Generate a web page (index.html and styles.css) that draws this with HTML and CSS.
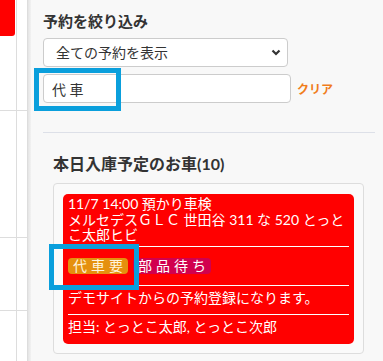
FILE: index.html
```html
<!DOCTYPE html>
<html lang="ja">
<head>
  <meta charset="UTF-8">
  <title>入庫予定</title>
  <meta name="viewport" content="width=device-width, initial-scale=1.0">
  <link rel="stylesheet" href="styles.css">
</head>
<body>

<div class="page">
  <div class="cal">
    <div class="cal-row r1">
      <div class="cal-cell"><div class="cal-ev"></div></div>
      <div class="cal-cell last"></div>
    </div>
    <div class="cal-row r2">
      <div class="cal-cell"></div>
      <div class="cal-cell last"></div>
    </div>
    <div class="cal-row r3">
      <div class="cal-cell"></div>
      <div class="cal-cell last"></div>
    </div>
    <div class="cal-row r4">
      <div class="cal-cell"></div>
      <div class="cal-cell last"></div>
    </div>
  </div>
  <div class="cal-shadow"></div>

  <div class="side">
    <h2 class="filter-title">予約を絞り込み</h2>

    <div class="select-wrap">
      <select class="filter-select">
        <option>全ての予約を表示</option>
      </select>
      <svg class="chevron" width="10" height="7" viewBox="0 0 10 7">
        <path d="M1.5 1.5 L5 5 L8.5 1.5" fill="none" stroke="#333" stroke-width="2.2"/>
      </svg>
    </div>

    <div class="search-row">
      <input class="search" type="text" value="代 車">
      <a class="clear" href="#">クリア</a>
    </div>

    <hr class="divider">

    <div class="today">
      <h3 class="today-title">本日入庫予定のお車(10)</h3>

      <div class="card">
        <div class="rsv">
          <div class="rsv-head">11/7 14:00 預かり車検<br>メルセデスＧＬＣ 世田谷 311 な 520 とっとこ太郎ヒビ</div>
          <hr class="rsv-line first">
          <div class="tags">
            <span class="tag car">代車要</span>
            <span class="tag parts">部品待ち</span>
          </div>
          <hr class="rsv-line">
          <div class="rsv-note">デモサイトからの予約登録になります。</div>
          <hr class="rsv-line">
          <div class="rsv-staff">担当: とっとこ太郎, とっとこ次郎</div>
        </div>
      </div>
    </div>
  </div>

  <div class="mark mark-search"></div>
  <div class="mark mark-tag"></div>
</div>

</body>
</html>
```

FILE: styles.css
```css
html, body {
  margin: 0;
  height: 100%;
  overflow: hidden;
}
body {
  font-family: 'Lato', 'Noto Sans CJK JP', sans-serif;
  color: #333;
  background: #f8f8f8;
}
.page {
  position: relative;
  display: flex;
  height: 100%;
}

/* left calendar strip */
.cal {
  width: 27px;
  border-right: 1px solid #ddd;
  background: #fff;
  display: flex;
  flex-direction: column;
}
.cal-row {
  display: flex;
  box-sizing: border-box;
  border-bottom: 1px solid #ddd;
}
.r1 { height: 111px; }
.r2 { height: 127px; }
.r3 { height: 73px; }
.r4 { flex: 1; border-bottom: none; }
.cal-cell {
  width: 16px;
  border-right: 1px solid #ddd;
}
.cal-cell.last {
  flex: 1;
  border-right: none;
}
.cal-ev {
  width: 15px;
  height: 36px;
  background: #ff0000;
  border-bottom-right-radius: 3px;
}
.cal-shadow {
  width: 3px;
  background: linear-gradient(to right, #e4e4e4, #f2f2f2);
}

/* sidebar */
.side {
  flex: 1;
  padding: 12px 8px 0 12px;
  background: #f8f8f8;
}
.filter-title {
  margin: 0;
  font-size: 15px;
  line-height: 18px;
  font-weight: bold;
}
.select-wrap {
  position: relative;
  width: 245px;
  margin-top: 8px;
}
.filter-select {
  -webkit-appearance: none;
  appearance: none;
  width: 100%;
  height: 29px;
  padding: 0 24px 0 12px;
  font-family: inherit;
  font-size: 14px;
  color: #333;
  background: #fff;
  border: 1px solid #ccc;
  border-radius: 4px;
  box-sizing: border-box;
}
.chevron {
  position: absolute;
  right: 7px;
  top: 11px;
}
.search-row {
  display: flex;
  align-items: center;
  gap: 6px;
  margin-top: 7px;
}
.search {
  width: 248px;
  height: 29px;
  padding: 0 8px;
  font-family: inherit;
  font-size: 14px;
  color: #333;
  background: #fff;
  border: 1px solid #ccc;
  border-radius: 4px;
  box-sizing: border-box;
}
.clear {
  color: #f07d1c;
  font-size: 12px;
  font-weight: 600;
  text-decoration: none;
}
.divider {
  margin: 29px 0 0;
  border: none;
  border-top: 1px solid #dde0e8;
}

/* today list */
.today {
  padding: 0 11px 0 10px;
}
.today-title {
  margin: 22px 0 10px;
  font-size: 16px;
  line-height: 18px;
  font-weight: bold;
}
.card {
  border: 1px solid #ddd;
  border-radius: 4px;
  background: #fafafa;
  padding: 10px 9px 9px;
}
.rsv {
  background: #ff0000;
  color: #fff;
  border-radius: 5px;
  padding: 2px 5px 9px;
  font-size: 14px;
  line-height: 15.5px;
}
.rsv-line {
  margin: 11px 0 4px;
  border: none;
  border-top: 1px solid #fff;
}
.rsv-line.first {
  margin-top: 3px;
  margin-bottom: 11px;
}
.rsv-note, .rsv-staff {
  line-height: 16px;
}
.rsv-note + .rsv-line {
  margin-top: 8px;
}
.tags {
  display: flex;
  gap: 5px;
}
.tag {
  display: inline-block;
  height: 16px;
  line-height: 16px;
  font-size: 14px;
  letter-spacing: 4px;
  padding: 0 1px 0 5px;
  border-radius: 4px;
}
.tag.car {
  background: #e5900e;
  color: #fff4dc;
}
.tag.parts {
  background: #d1004e;
  color: #fff;
}

/* annotation frames */
.mark {
  position: absolute;
  border: 5px solid #0a9fdc;
  box-sizing: border-box;
}
.mark-search {
  left: 34px;
  top: 68px;
  width: 87px;
  height: 43px;
}
.mark-tag {
  left: 49px;
  top: 244px;
  width: 90px;
  height: 46px;
}
```
